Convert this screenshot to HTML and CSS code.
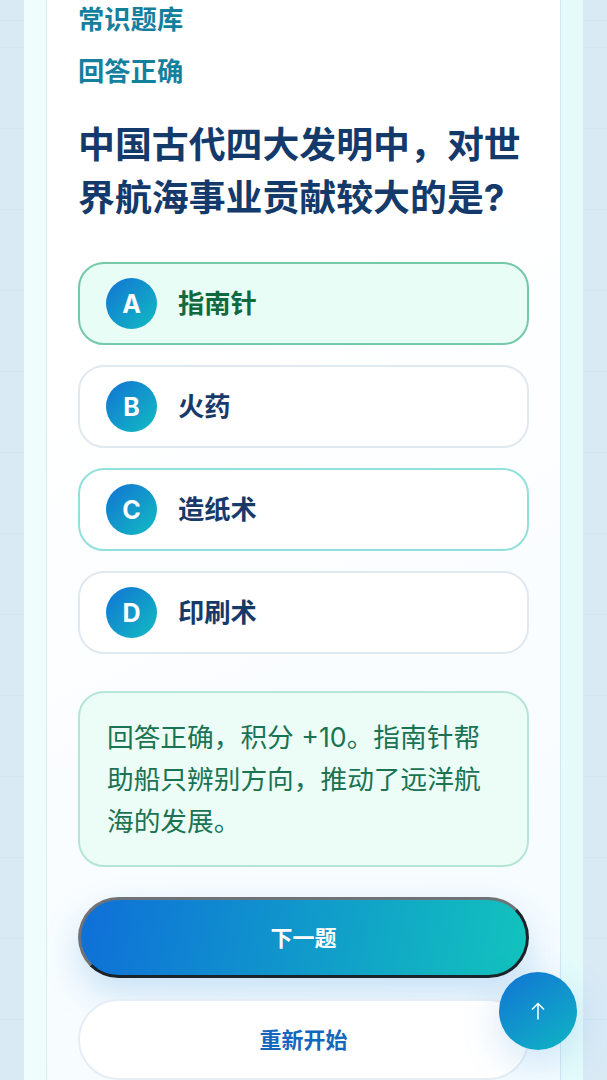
FILE: index.html
```html
<!DOCTYPE html>
<html>
<head>
    <title>常识题库</title>
    <link rel="stylesheet" href="styles.css">
</head>
<body>
    <div id="shell">
        <div id="card">
            <div class="kicker">常识题库</div>
            <div class="kicker status">回答正确</div>
            <h1 id="question">中国古代四大发明中，对世界航海事业贡献较大的是?</h1>
            <div id="options">
                <div class="option correct"><span class="letter">A</span><span class="label">指南针</span></div>
                <div class="option"><span class="letter">B</span><span class="label">火药</span></div>
                <div class="option focused"><span class="letter">C</span><span class="label">造纸术</span></div>
                <div class="option"><span class="letter">D</span><span class="label">印刷术</span></div>
            </div>
            <div id="feedback">回答正确，积分 +10。指南针帮助船只辨别方向，推动了远洋航海的发展。</div>
            <button id="next">下一题</button>
            <button id="restart">重新开始</button>
        </div>
    </div>
    <button id="top">
        <svg width="16" height="18" viewBox="0 0 16 18" fill="none" stroke="#fff" stroke-width="1.5">
            <path d="M8 17.5V1.5M2 7.5L8 1.5L14 7.5"/>
        </svg>
    </button>
</body>
</html>
```

FILE: styles.css
```css
html, body {
    margin: 0;
    height: 1080px;
    overflow: hidden;
}

body {
    position: relative;
    padding: 0 24px;
    box-sizing: border-box;
    background-color: #d9eaf5;
    background-image: repeating-linear-gradient(180deg, rgba(170, 200, 220, 0.12) 0, rgba(170, 200, 220, 0.12) 1px, transparent 1px, transparent 81px);
    background-position: 0 47px;
    font-family: Inter, "Noto Sans CJK SC", sans-serif;
}

#shell {
    height: 1080px;
    padding: 0 22px;
    background: linear-gradient(90deg, #effefd, #e5fbfb);
}

#card {
    height: 1080px;
    box-sizing: border-box;
    padding: 1px 31px 0;
    background: linear-gradient(155deg, #ffffff 30%, #f4fbff 100%);
    border-left: 1px solid #dce9f7;
    border-right: 1px solid #d3e6f2;
    overflow: hidden;
}

.kicker {
    font-size: 26.3px;
    font-weight: 700;
    line-height: 38px;
    color: #157f9e;
    margin-bottom: 14px;
}

#question {
    margin: 27px 0 38px;
    font-size: 36.9px;
    line-height: 53px;
    font-weight: 700;
    color: #143a6b;
}

#options {
    display: flex;
    flex-direction: column;
    gap: 20px;
}

.option {
    display: flex;
    align-items: center;
    gap: 21px;
    height: 83px;
    box-sizing: border-box;
    padding-left: 26px;
    background: #fff;
    border: 2px solid #e0e8f0;
    border-radius: 26px;
    font-size: 26.3px;
    font-weight: 700;
    color: #173a68;
}

.option.correct {
    background: #e8fdf5;
    border-color: #74c9a8;
    color: #12693f;
}

.option.focused {
    border-color: #91e0dc;
}

.label {
    font-family: "Noto Sans CJK SC", sans-serif;
    line-height: 38px;
    padding-bottom: 4px;
}

.letter {
    width: 51px;
    height: 51px;
    border-radius: 50%;
    display: flex;
    align-items: center;
    justify-content: center;
    background: linear-gradient(135deg, #1273d4, #12bcc2);
    color: #fff;
    font-size: 25px;
}

#feedback {
    margin-top: 37px;
    height: 176px;
    box-sizing: border-box;
    padding: 23px 27px;
    background: #ecfdf7;
    border: 2px solid #b5e6d5;
    border-radius: 26px;
    font-size: 26.7px;
    line-height: 42px;
    color: #1a7352;
}

#next, #restart {
    display: block;
    width: 100%;
    padding: 0 0 4px;
    border-radius: 41px;
    font-family: "Noto Sans CJK SC", sans-serif;
    font-size: 22px;
    font-weight: 700;
}

#next {
    margin-top: 30px;
    height: 81px;
    background: linear-gradient(100deg, #0f6fd8, #12c3bd);
    color: #fff;
    border: 3px solid;
    border-color: #6f7378 #1b2228 #1b2228 #6f7378;
    box-shadow: 0 16px 36px rgba(30, 130, 210, 0.22);
}

#restart {
    margin-top: 21px;
    height: 81px;
    background: #fff;
    color: #1467bd;
    border: 2px solid #e6edf5;
}

#top {
    position: absolute;
    left: 499px;
    top: 972px;
    width: 78px;
    height: 78px;
    padding: 0;
    display: flex;
    align-items: center;
    justify-content: center;
    border: none;
    border-radius: 50%;
    background: linear-gradient(145deg, #1173d4, #10b6c4);
    box-shadow: 0 12px 40px rgba(30, 130, 210, 0.2);
}
```
